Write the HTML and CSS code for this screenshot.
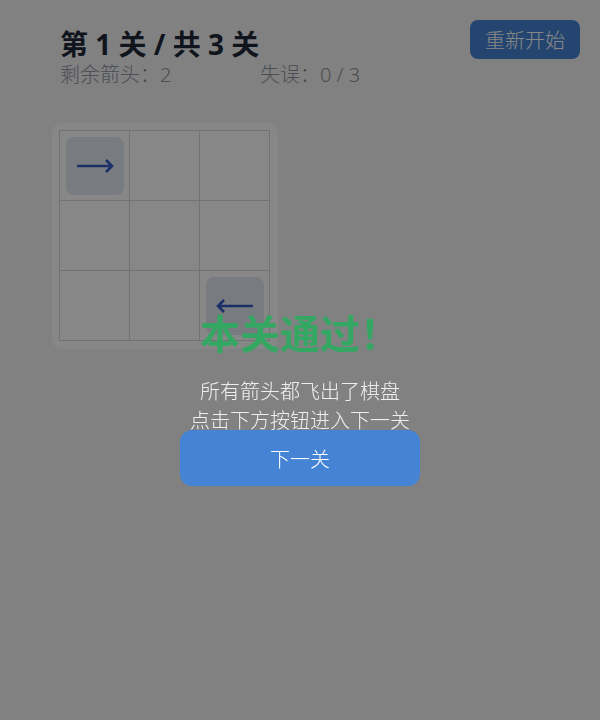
FILE: index.html
```html
<!DOCTYPE html>
<html lang="zh-CN">
<head>
    <meta charset="UTF-8">
    <meta name="viewport" content="width=device-width, initial-scale=1.0">
    <title>箭头消除</title>
    <link rel="stylesheet" href="styles.css">
</head>
<body>
    <header class="top-bar">
        <div class="level-info">
            <h1 class="level-title">第 1 关 / 共 3 关</h1>
            <div class="stats">
                <span class="stat">剩余箭头：2</span>
                <span class="stat">失误：0 / 3</span>
            </div>
        </div>
        <button class="btn-restart">重新开始</button>
    </header>

    <main class="game">
        <div class="board">
            <div class="cell">
                <div class="piece">
                    <svg class="arrow" viewBox="0 0 58 58" width="58" height="58">
                        <path d="M11 29H46M40 23l6 6-6 6" />
                    </svg>
                </div>
            </div>
            <div class="cell"></div>
            <div class="cell"></div>
            <div class="cell"></div>
            <div class="cell"></div>
            <div class="cell"></div>
            <div class="cell"></div>
            <div class="cell"></div>
            <div class="cell">
                <div class="piece">
                    <svg class="arrow" viewBox="0 0 58 58" width="58" height="58">
                        <path d="M47 29H12M18 23l-6 6 6 6" />
                    </svg>
                </div>
            </div>
        </div>
    </main>

    <!-- 过关弹层 -->
    <div class="overlay">
        <h2 class="win-title">本关通过！</h2>
        <p class="win-text">所有箭头都飞出了棋盘<br>点击下方按钮进入下一关</p>
        <button class="btn-next">下一关</button>
    </div>
</body>
</html>
```

FILE: styles.css
```css
:root {
    --bg: #f3f4f6;
    --text-dark: #1f2937;
    --text-muted: #909399;
    --primary: #4583d4;
    --grid-line: #d6d8dc;
    --piece-bg: #e2e8f0;
    --arrow: #3459c4;
    --success: #34a862;
}

* {
    margin: 0;
    padding: 0;
    box-sizing: border-box;
}

body {
    font-family: "Noto Sans", "Noto Sans CJK SC", sans-serif;
    background: var(--bg);
    color: var(--text-dark);
    height: 720px;
    overflow: hidden;
}

.top-bar {
    display: flex;
    justify-content: space-between;
    align-items: flex-start;
    padding: 20px 20px 0 60px;
}

.level-info {
    margin-top: 6px;
}

.level-title {
    font-size: 28px;
    line-height: 36px;
    font-weight: 700;
}

.stats {
    display: flex;
    font-size: 20px;
    line-height: 26px;
    font-weight: 300;
    color: var(--text-muted);
}

.stat {
    min-width: 200px;
}

.btn-restart {
    height: 39px;
    padding: 0 15px;
    border: none;
    border-radius: 8px;
    background: var(--primary);
    color: #fff;
    font-family: inherit;
    font-size: 20px;
    font-weight: 300;
    cursor: pointer;
}

.game {
    padding: 35px 0 0 52px;
}

.board {
    display: inline-grid;
    grid-template-columns: repeat(3, 70px);
    grid-template-rows: repeat(3, 70px);
    padding: 8px;
    background: #fff;
    border-radius: 10px;
}

.cell {
    display: flex;
    align-items: center;
    justify-content: center;
    border-right: 1px solid var(--grid-line);
    border-bottom: 1px solid var(--grid-line);
}

.cell:nth-child(-n+3) {
    border-top: 1px solid var(--grid-line);
    height: 71px;
    margin-top: -1px;
}

.cell:nth-child(3n+1) {
    border-left: 1px solid var(--grid-line);
    width: 71px;
    margin-left: -1px;
}

.piece {
    width: 58px;
    height: 58px;
    border-radius: 8px;
    background: var(--piece-bg);
}

.arrow {
    display: block;
    fill: none;
    stroke: var(--arrow);
    stroke-width: 2.6;
}

.overlay {
    position: fixed;
    inset: 0;
    display: flex;
    flex-direction: column;
    align-items: center;
    padding-top: 310px;
    background: rgba(0, 0, 0, 0.47);
}

.win-title {
    font-size: 40px;
    line-height: 48px;
    font-weight: 700;
    color: var(--success);
}

.win-text {
    margin-top: 19px;
    font-size: 20px;
    line-height: 29px;
    font-weight: 300;
    color: #eee;
    text-align: center;
}

.btn-next {
    width: 240px;
    height: 56px;
    margin-top: -5px;
    border: none;
    border-radius: 12px;
    background: var(--primary);
    color: #fff;
    font-family: inherit;
    font-size: 20px;
    font-weight: 300;
    cursor: pointer;
}
```
